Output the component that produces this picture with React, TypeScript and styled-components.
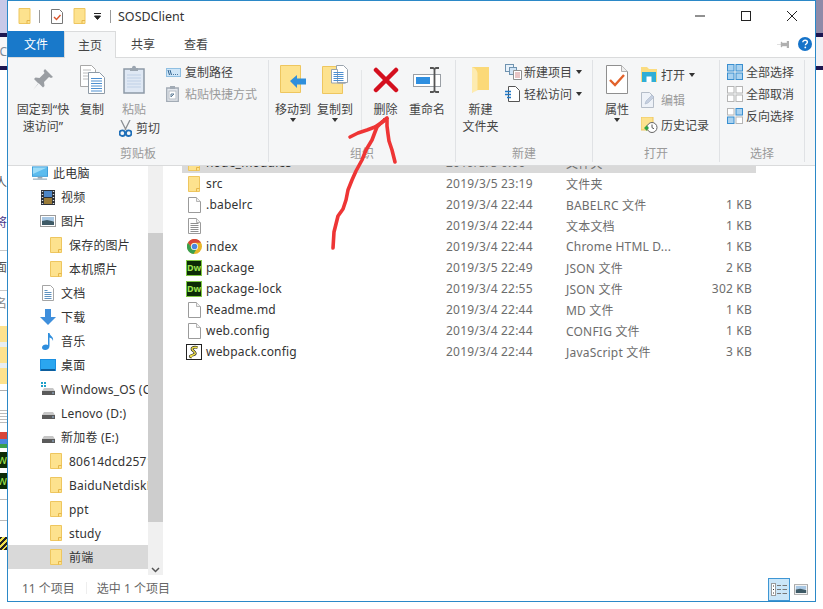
import React from "react";
import styled, { createGlobalStyle } from "styled-components";

const GlobalStyle = createGlobalStyle`
  html, body {
    margin: 0;
    padding: 0;
    background: #fff;
  }
  body {
    font-family: "Noto Sans", "Noto Sans CJK SC", sans-serif;
    font-size: 12px;
    color: #333;
  }
`;

const Page = styled.div`
  position: relative;
  width: 823px;
  height: 609px;
  display: flex;
  align-items: flex-start;
  overflow: hidden;
`;

const Strip = styled.div`
  width: 7px;
  flex: none;
  display: flex;
  flex-direction: column;
  overflow: hidden;
`;

const StripBlock = styled.div<{ $h: number; $bg?: string; $color?: string }>`
  height: ${(p) => p.$h}px;
  flex: none;
  background: ${(p) => p.$bg || "#fff"};
  color: ${(p) => p.$color || "#555"};
  display: flex;
  justify-content: flex-end;
  align-items: center;
  font-size: 12px;
  line-height: 1;
  white-space: nowrap;
`;

const Window = styled.div`
  width: 809px;
  height: 602px;
  flex: none;
  box-sizing: border-box;
  border: 1px solid #2b88c7;
  background: #fff;
  display: flex;
  flex-direction: column;
`;

const TitleBar = styled.div`
  height: 30px;
  flex: none;
  display: flex;
  align-items: center;
  padding-left: 10px;
`;

const QuickItem = styled.div<{ $ml?: number }>`
  margin-left: ${(p) => p.$ml || 0}px;
  display: flex;
  align-items: center;
`;

const TitleSep = styled.div<{ $ml: number }>`
  width: 1px;
  height: 13px;
  margin-left: ${(p) => p.$ml}px;
  background: #9a9a9a;
`;

const TitleText = styled.div`
  margin-left: 7px;
  font-size: 12.5px;
  color: #333;
`;

const WindowControls = styled.div`
  margin-left: auto;
  display: flex;
`;

const ControlButton = styled.div`
  width: 46px;
  height: 30px;
  display: flex;
  align-items: center;
  justify-content: center;
`;

const TabRow = styled.div`
  height: 27px;
  flex: none;
  box-sizing: border-box;
  display: flex;
  border-bottom: 1px solid #dadbdc;
`;

const Tab = styled.div<{ $w: number; $kind?: "file" | "active" }>`
  width: ${(p) => p.$w}px;
  height: ${(p) => (p.$kind === "active" ? 27 : 26)}px;
  box-sizing: border-box;
  display: flex;
  align-items: center;
  justify-content: center;
  color: ${(p) => (p.$kind === "file" ? "#fff" : "#444")};
  background: ${(p) =>
    p.$kind === "file" ? "#1979ca" : p.$kind === "active" ? "#f5f6f7" : "transparent"};
  border: ${(p) => (p.$kind === "active" ? "1px solid #dadbdc" : "none")};
  border-bottom: none;
`;

const TabExtras = styled.div`
  margin-left: auto;
  padding-right: 3px;
  display: flex;
  align-items: center;
  gap: 9px;
`;

const Ribbon = styled.div`
  height: 108px;
  flex: none;
  box-sizing: border-box;
  padding-top: 2px;
  display: flex;
  background: #f5f6f7;
  border-bottom: 1px solid #dadbdc;
`;

const Group = styled.div<{ $w: number }>`
  width: ${(p) => p.$w}px;
  height: 102px;
  flex: none;
  box-sizing: border-box;
  display: flex;
  flex-direction: column;
  border-right: 1px solid #e0e2e5;
`;

const GroupBody = styled.div<{ $pl?: number }>`
  height: 85px;
  flex: none;
  display: flex;
  padding-left: ${(p) => p.$pl || 0}px;
`;

const GroupLabel = styled.div`
  height: 17px;
  line-height: 17px;
  text-align: center;
  color: #9a9a9a;
`;

const LargeButton = styled.div<{ $w: number }>`
  width: ${(p) => p.$w}px;
  flex: none;
  display: flex;
  flex-direction: column;
  align-items: center;
`;

const LargeIcon = styled.div`
  height: 39px;
  margin-bottom: 2px;
  display: flex;
  align-items: center;
  justify-content: center;
`;

const LargeLabel = styled.div<{ $muted?: boolean }>`
  line-height: 17px;
  text-align: center;
  white-space: pre;
  color: ${(p) => (p.$muted ? "#9a9a9a" : "#444")};
`;

const Caret = styled.span`
  display: block;
  flex: none;
  width: 0;
  height: 0;
  border-left: 3.5px solid transparent;
  border-right: 3.5px solid transparent;
  border-top: 4px solid #333;
`;

const InnerDivider = styled.div`
  width: 1px;
  height: 60px;
  margin: 10px 0 0 5px;
  flex: none;
  background: #e4e6e8;
`;

const PasteColumn = styled.div`
  width: 52px;
  flex: none;
  display: flex;
  flex-direction: column;
`;

const SmallColumn = styled.div<{ $mt?: number }>`
  margin-top: ${(p) => p.$mt ?? 1}px;
  display: flex;
  flex-direction: column;
`;

const SmallRow = styled.div<{ $h?: number; $ml?: number }>`
  height: ${(p) => p.$h || 22}px;
  margin-left: ${(p) => p.$ml || 0}px;
  display: flex;
  align-items: center;
  white-space: nowrap;
`;

const SmallIcon = styled.div<{ $w?: number }>`
  width: ${(p) => p.$w || 19}px;
  flex: none;
  display: flex;
  align-items: center;
`;

const SmallLabel = styled.span<{ $muted?: boolean }>`
  color: ${(p) => (p.$muted ? "#9a9a9a" : "#444")};
`;

const SmallCaret = styled(Caret)`
  margin-left: 4px;
`;

const Content = styled.div`
  flex: 1;
  min-height: 0;
  display: flex;
`;

const Sidebar = styled.div`
  width: 155px;
  flex: none;
  display: flex;
  overflow: hidden;
`;

const NavList = styled.div`
  width: 140px;
  flex: none;
  margin-top: -5px;
  display: flex;
  flex-direction: column;
`;

const NavRow = styled.div<{ $level: number; $selected?: boolean }>`
  height: 24px;
  flex: none;
  box-sizing: border-box;
  padding-left: ${(p) => 24 + p.$level * 8}px;
  display: flex;
  align-items: center;
  overflow: hidden;
  white-space: nowrap;
  background: ${(p) => (p.$selected ? "#d9d9d9" : "transparent")};
`;

const NavIcon = styled.div`
  width: 16px;
  flex: none;
  margin-right: 5px;
  display: flex;
  justify-content: center;
`;

const NavText = styled.span`
  color: #333;
  letter-spacing: 0.2px;
`;

const ScrollTrack = styled.div`
  width: 15px;
  flex: none;
  display: flex;
  flex-direction: column;
  align-items: center;
  background: #f0f0f0;
`;

const ScrollThumb = styled.div`
  width: 15px;
  height: 289px;
  margin-top: 67px;
  background: #cdcdcd;
`;

const ScrollArrow = styled.div`
  margin-top: auto;
  margin-bottom: 2px;
  display: flex;
`;

const FilePane = styled.div`
  flex: 1;
  margin-left: 19px;
  overflow: hidden;
`;

const FileList = styled.div`
  width: 574px;
  margin-top: -14px;
`;

const FileRow = styled.div<{ $selected?: boolean }>`
  height: 21px;
  display: grid;
  grid-template-columns: 24px 240px 120px 120px 66px;
  align-items: center;
  white-space: nowrap;
  letter-spacing: 0.2px;
  background: ${(p) => (p.$selected ? "#d9d9d9" : "transparent")};
`;

const FileIconCell = styled.div`
  display: flex;
  justify-content: center;
`;

const FileName = styled.span`
  color: #333;
`;

const FileMeta = styled.span`
  color: #6d6d6d;
`;

const FileSize = styled(FileMeta)`
  text-align: right;
`;

const DwBadge = styled.div`
  width: 16px;
  height: 16px;
  box-sizing: border-box;
  border: 1px solid #7ec843;
  background: #0c2b06;
  color: #9be34e;
  font-size: 9px;
  font-weight: 700;
  line-height: 14px;
  letter-spacing: 0;
  text-align: center;
`;

const StatusBar = styled.div`
  height: 26px;
  flex: none;
  display: flex;
  align-items: center;
  padding-left: 14px;
  color: #666;
`;

const StatusDivider = styled.div`
  width: 1px;
  height: 12px;
  margin: 0 10px 0 11px;
  background: #eee;
`;

const ViewButtons = styled.div`
  margin-left: auto;
  margin-right: 7px;
  align-self: flex-end;
  display: flex;
  align-items: center;
  gap: 4px;
`;

const ViewButton = styled.div<{ $active?: boolean }>`
  width: 22px;
  height: 23px;
  box-sizing: border-box;
  display: flex;
  align-items: center;
  justify-content: center;
  background: ${(p) => (p.$active ? "#cbe6f8" : "transparent")};
  border: 1px solid ${(p) => (p.$active ? "#3e96d4" : "transparent")};
`;

const Annotation = styled.svg`
  position: absolute;
  left: 0;
  top: 0;
  pointer-events: none;
`;

/* ---------- icons ---------- */

function Folder({ w = 12, h = 16 }: { w?: number; h?: number }) {
  return (
    <svg width={w} height={h} viewBox="0 0 12 16">
      <path d="M.5.5h11v15H.5z" fill="#fde28e" stroke="#eec65f" />
      <path d="M8.5 15.5v-3h3" fill="none" stroke="#e6b64a" />
    </svg>
  );
}

function PageIcon({ lines }: { lines?: boolean }) {
  return (
    <svg width="13" height="16" viewBox="0 0 13 16">
      <path d="M.5.5h8l4 4v11H.5z" fill="#fff" stroke="#9b9b9b" />
      <path d="M8.5.5v4h4" fill="#f0f0f0" stroke="#b5b5b5" />
      {lines && (
        <path d="M2.5 5.5h8M2.5 7.5h8M2.5 9.5h8M2.5 11.5h8M2.5 13.5h8" stroke="#8f8f8f" />
      )}
    </svg>
  );
}

function ChromeIcon() {
  return (
    <svg width="15" height="15" viewBox="0 0 16 16">
      <circle cx="8" cy="8" r="8" fill="#e8b62a" />
      <path d="M1 4A8 8 0 0 1 15 4H8A4 4 0 0 0 4 8z" fill="#d8453a" />
      <path d="M1 4a8 8 0 0 0 6 12l3-5a4 4 0 0 1-6-3z" fill="#3a9f4e" />
      <circle cx="8" cy="8" r="3.8" fill="#fff" />
      <circle cx="8" cy="8" r="3" fill="#4a86e0" />
    </svg>
  );
}

function ScriptIcon() {
  return (
    <svg width="16" height="16" viewBox="0 0 16 16">
      <rect x=".5" y=".5" width="15" height="15" fill="#fff" stroke="#222" />
      <path d="M11.5 3.5C7 2.5 4.5 4.5 7 6.5s3.5 3.500 0 4.500-3.500 1.500-1 2" fill="none" stroke="#222" strokeWidth="2.8" />
      <path d="M11.5 3.5C7 2.5 4.500 4.500 7 6.500s3.500 3.500 0 4.500-3.500 1.500-1 2" fill="none" stroke="#f0e04a" strokeWidth="1.4" />
    </svg>
  );
}

function MonitorIcon() {
  return (
    <svg width="17" height="15" viewBox="0 0 17 15">
      <rect x=".5" y=".5" width="16" height="10" fill="#5cbcee" stroke="#3a9ad6" />
      <path d="M1 1h15L1 8z" fill="#9cdcf8" />
      <path d="M6 11h5v2H6z" fill="#9aa7b0" />
      <path d="M1 13.500h15" stroke="#9fb4c2" strokeWidth="1.4" />
    </svg>
  );
}

function VideoIcon() {
  return (
    <svg width="14" height="15" viewBox="0 0 14 15">
      <rect width="14" height="15" fill="#2d3138" />
      <rect x="3" y="1" width="8" height="6" fill="#4e86c6" />
      <rect x="3" y="8" width="8" height="6" fill="#9a7b38" />
      <path d="M.8 1.500h1.400M.8 4.500h1.400M.8 7.500h1.400M.8 10.500h1.400M.8 13.500h1.400M11.800 1.500h1.400M11.800 4.500h1.400M11.800 7.500h1.400M11.800 10.500h1.400M11.800 13.500h1.400" stroke="#dfe3e8" />
    </svg>
  );
}

function PictureIcon({ w = 16, h = 12 }: { w?: number; h?: number }) {
  return (
    <svg width={w} height={h} viewBox="0 0 16 12">
      <rect x=".5" y=".5" width="15" height="11" fill="#fff" stroke="#9b9b9b" />
      <rect x="2" y="2" width="12" height="4" fill="#a9c8e4" />
      <path d="M2 6l5-1 7 1.500V10H2z" fill="#3e5a66" />
    </svg>
  );
}

function DocIcon() {
  return (
    <svg width="12" height="16" viewBox="0 0 12 16">
      <path d="M.5.5h8l3 3v12H.5z" fill="#fff" stroke="#a5a5a5" />
      <path d="M2.500 5.500h3M2.500 7.500h7M2.500 9.500h7M2.500 11.500h7M2.500 13.500h7" stroke="#5f92bf" />
    </svg>
  );
}

function DownloadIcon() {
  return (
    <svg width="16" height="16" viewBox="0 0 16 16">
      <path d="M5 0h6v8h5l-8 8-8-8h5z" fill="#3f8fdc" />
    </svg>
  );
}

function MusicIcon() {
  return (
    <svg width="12" height="17" viewBox="0 0 12 17">
      <path d="M6 0h1.500c.4 3 4.500 3.500 3.500 8-.6-2.200-2-3-3.500-3.400V13c0 2.400-2 4-4.300 4C1 17 0 16 0 14.600 0 12.800 2 11.500 4 11.500c.8 0 1.500.2 2 .5z" fill="#2f8edd" />
    </svg>
  );
}

function DesktopIcon() {
  return (
    <svg width="16" height="12" viewBox="0 0 16 12">
      <rect width="16" height="12" fill="#1b8fe0" />
      <path d="M1 1h14v9H1z" fill="#2ba6ef" />
      <path d="M1 10h14v2H1z" fill="#0e5e9c" />
    </svg>
  );
}

function DriveIcon({ system }: { system?: boolean }) {
  return (
    <svg width="15" height="14" viewBox="0 0 15 14">
      {system && <path d="M0 0h2v2H0zM3 0h2v2H3zM0 3h2v2H0zM3 3h2v2H3z" fill="#1fa0c8" />}
      <path d="M3 6h9l2 3H1z" fill="#c6c6c6" />
      <rect x="1" y="9" width="13" height="4" fill="#5a5a5a" />
      <rect x="11" y="10.500" width="2" height="1" fill="#9bd" />
    </svg>
  );
}

function PinIcon() {
  return (
    <svg width="22" height="23" viewBox="0 0 22 23">
      <path d="M13 1l8 8-2 1-2-1-5 5 .5 4-1.500 1.500-4.500-4.500L1 22l5.500-6.500L2 11l1.500-1.500 4 .5 5-5-1-2z" fill="#9a9ea3" />
    </svg>
  );
}

function CopyIcon() {
  return (
    <svg width="25" height="29" viewBox="0 0 25 29">
      <path d="M.5.5h11l4 4v17H.5z" fill="#fff" stroke="#a8a8a8" />
      <path d="M3 5h8M3 8h8M3 11h8M3 14h5" stroke="#bcbcbc" />
      <path d="M8.500 7.500h11l5 5v16h-16z" fill="#fff" stroke="#8e9aa6" />
      <path d="M11 13.500h11M11 16h11M11 18.500h11M11 21h11M11 23.500h11M11 26h11" stroke="#4d8fd0" />
    </svg>
  );
}

function PasteIcon() {
  return (
    <svg width="22" height="29" viewBox="0 0 22 29">
      <path d="M1 4h20v24H1z" fill="#dfe8f4" stroke="#8d99a6" strokeWidth="1.500" />
      <path d="M7 3h2c0-3 4-3 4 0h2v3H7z" fill="#9ba5b0" />
      <path d="M4 10h14M4 13h14M4 16h14M4 19h14M4 22h14" stroke="#bfd0e6" />
    </svg>
  );
}

function ScissorsIcon() {
  return (
    <svg width="13" height="17" viewBox="0 0 13 17">
      <path d="M2 0l5 10M11 0L6 10" stroke="#8a8f94" strokeWidth="1.300" fill="none" />
      <circle cx="3.300" cy="13.200" r="2.800" fill="none" stroke="#1f6fb8" strokeWidth="1.900" />
      <circle cx="9.700" cy="13.200" r="2.800" fill="none" stroke="#1f6fb8" strokeWidth="1.900" />
    </svg>
  );
}

function CopyPathIcon() {
  return (
    <svg width="15" height="9" viewBox="0 0 15 9">
      <rect x=".5" y=".5" width="14" height="8" fill="#cfe6f8" stroke="#8fbfe2" />
      <path d="M2 2l1.500 5M4 2l1.500 5M7 6.500h.8M9 6.500h.8M11 6.500h.8" stroke="#2a5e8c" />
    </svg>
  );
}

function ShortcutIcon() {
  return (
    <svg width="13" height="16" viewBox="0 0 13 16">
      <path d="M.7 2h11.600v13.300H.7z" fill="#e4e8ee" stroke="#a2abb5" strokeWidth="1.300" />
      <path d="M4 0h5v3H4z" fill="#a2abb5" />
      <rect x="3" y="5" width="7" height="8" fill="#fff" stroke="#b5bcc4" />
      <path d="M5 11V8h3M8 8l-3 3" stroke="#5f7c96" fill="none" />
    </svg>
  );
}

function MoveToIcon() {
  return (
    <svg width="27" height="29" viewBox="0 0 27 29">
      <path d="M.5.500h20v27H.5z" fill="#fde28e" stroke="#eec65f" />
      <path d="M10 16l7-6v3.500h9v6h-9V23z" fill="#2f8fdc" />
    </svg>
  );
}

function CopyToIcon() {
  return (
    <svg width="26" height="30" viewBox="0 0 26 30">
      <path d="M.5 1.500h20v27H.5z" fill="#fde28e" stroke="#eec65f" />
      <path d="M14.500 7.500V.5h7l4 4v13h-11z" fill="#fff" stroke="#9aa4ae" />
      <path d="M9.500 4.500h6v13.500h8V18h-14z" fill="#fff" stroke="#9aa4ae" />
      <path d="M11.500 7.500h10M11.500 9.500h10M11.500 11.500h10M11.500 13.500h10M11.500 15.500h10" stroke="#4d8fd0" />
    </svg>
  );
}

function DeleteIcon() {
  return (
    <svg width="26" height="26" viewBox="0 0 26 26">
      <path d="M3 3l20 20M23 3L3 23" stroke="#d40f1e" strokeWidth="4.500" strokeLinecap="round" />
    </svg>
  );
}

function RenameIcon() {
  return (
    <svg width="28" height="26" viewBox="0 0 28 26">
      <rect x=".5" y="7.500" width="27" height="12" fill="#fff" stroke="#9a9fa5" />
      <rect x="3" y="10" width="14" height="7" fill="#2f8fe0" />
      <path d="M17 1h3l1.500 1L23 1h3M21.500 2v22M17 25h3l1.500-1 1.500 1h3" fill="none" stroke="#555" strokeWidth="1.800" />
    </svg>
  );
}

function NewFolderIcon() {
  return (
    <svg width="19" height="28" viewBox="0 0 19 28">
      <path d="M1 1h17v23H8c-4 0-6.500 1-7 3z" fill="#fbd978" />
      <path d="M1 1c3 1 5 3 5.500 6v16c0 2-3 2.500-5.500 4z" fill="#fdebb0" />
    </svg>
  );
}

function NewItemIcon() {
  return (
    <svg width="17" height="16" viewBox="0 0 17 16">
      <rect x=".5" y=".5" width="8" height="7" fill="#e8f2fb" stroke="#6f93b0" />
      <rect x="4.500" y="3.500" width="7" height="7" fill="#cfe3f5" stroke="#6f93b0" />
      <path d="M8.500 6.500h8v9h-8z" fill="#fff" stroke="#8f8f8f" />
      <path d="M10 9h5M10 11h5M10 13h5" stroke="#d28a8a" />
    </svg>
  );
}

function EasyAccessIcon() {
  return (
    <svg width="15" height="16" viewBox="0 0 15 16">
      <path d="M3.500.5h7l4 4v11h-11z" fill="#fff" stroke="#555" />
      <path d="M0 5.500h6M0 8.500h6M2 11.500h4" stroke="#1f78c8" strokeWidth="1.300" />
    </svg>
  );
}

function PropertiesIcon() {
  return (
    <svg width="22" height="29" viewBox="0 0 22 29">
      <path d="M.5.500h15l6 6v22H.5z" fill="#fff" stroke="#8f8f8f" />
      <path d="M15.500.5v6h6" fill="#eee" stroke="#b0b0b0" />
      <path d="M4 15l5 5 9-10" fill="none" stroke="#e2622b" strokeWidth="2.400" />
    </svg>
  );
}

function OpenIcon() {
  return (
    <svg width="16" height="15" viewBox="0 0 16 15">
      <path d="M0 0h6l2 2h8v13H0z" fill="#fbdc80" />
      <path d="M1 5h14v10H1z" fill="#2faed6" />
      <path d="M5.500 15V9.500h5V15z" fill="#fff" />
    </svg>
  );
}

function EditIcon() {
  return (
    <svg width="14" height="16" viewBox="0 0 14 16">
      <path d="M.5.500h8l4 4v11H.5z" fill="#eef2f8" stroke="#b5bdc8" />
      <path d="M4 12l1-3 6-6 2 2-6 6z" fill="#c5cfe0" stroke="#aab6c8" strokeWidth=".6" />
    </svg>
  );
}

function HistoryIcon() {
  return (
    <svg width="17" height="16" viewBox="0 0 17 16">
      <path d="M0 0h12v13H0z" fill="#fde28e" stroke="#eec65f" />
      <circle cx="11" cy="10.500" r="5" fill="#fff" stroke="#666" />
      <path d="M11 7.500v3.200l2 1" fill="none" stroke="#555" />
      <path d="M3 11l3-3v1.800h1.500v2.400H6V14z" fill="#2fa344" />
    </svg>
  );
}

function GridIcon({ filled, size = 16 }: { filled: boolean[]; size?: number }) {
  const half = (size - 1) / 2;
  const cells = [
    [0, 0],
    [half + 1, 0],
    [0, half + 1],
    [half + 1, half + 1],
  ];
  return (
    <svg width={size} height={size} viewBox={`0 0 ${size} ${size}`}>
      {cells.map(([x, y], i) => (
        <rect
          key={i}
          x={x + 0.5}
          y={y + 0.5}
          width={half - 1}
          height={half - 1}
          fill={filled[i] ? "#a9d2f0" : "#fff"}
          stroke={filled[i] ? "#3a8fd0" : "#b5b5b5"}
        />
      ))}
    </svg>
  );
}

function HelpIcon() {
  return (
    <svg width="14" height="14" viewBox="0 0 14 14">
      <circle cx="7" cy="7" r="7" fill="#1573c9" />
      <path d="M4.800 5.300C4.800 3.800 6 3.200 7.100 3.200c1.300 0 2.300.8 2.300 1.900 0 1.700-2 1.700-2 3.200" fill="none" stroke="#fff" strokeWidth="1.400" />
      <circle cx="7.300" cy="10.400" r=".9" fill="#fff" />
    </svg>
  );
}

function RibbonPinIcon() {
  return (
    <svg width="12" height="7" viewBox="0 0 12 7">
      <path d="M0 3.500h4M4 1h1v5H4zM5 2h5v3H5zM10 0h2v7h-2z" fill="#b0b0b0" stroke="#b0b0b0" strokeWidth=".4" />
    </svg>
  );
}

function DetailViewIcon() {
  return (
    <svg width="16" height="13" viewBox="0 0 16 13">
      <rect x=".5" y=".5" width="4" height="12" fill="#fff" stroke="#9a9a9a" />
      <path d="M2 3h1M2 6.500h1M2 10h1" stroke="#333" />
      <path d="M6 2.500h4M11.500 2.500H16M6 6.500h4M11.500 6.500H16M6 10.500h4M11.500 10.500H16" stroke="#777" />
    </svg>
  );
}

/* ---------- data ---------- */

const leftStrip: { h: number; bg?: string; color?: string; text?: string }[] = [
  { h: 33, bg: "#c8c9e8" },
  { h: 4, bg: "#1c1650" },
  { h: 29, bg: "#f6f6f8", text: "eC", color: "#7a8a99" },
  { h: 4, bg: "#1c1650" },
  { h: 105 },
  { h: 15, text: "人" },
  { h: 25 },
  { h: 15, text: "将", color: "#4a3a8a" },
  { h: 20 },
  { h: 1, bg: "#c8c8c8" },
  { h: 9 },
  { h: 15, text: "面" },
  { h: 15 },
  { h: 1, bg: "#c8c8c8" },
  { h: 7 },
  { h: 12, text: "名", color: "#888" },
  { h: 16 },
  { h: 16, bg: "#fde28e" },
  { h: 5, bg: "#e8eef2" },
  { h: 16, bg: "#fde28e" },
  { h: 5, bg: "#e8eef2" },
  { h: 16, bg: "#fde28e" },
  { h: 6 },
  { h: 1, bg: "#b0b0b0" },
  { h: 19 },
  { h: 15, bg: "repeating-linear-gradient(#bbb 0 1px, #fff 1px 3px)" },
  { h: 7 },
  { h: 16, bg: "linear-gradient(#d8453a 0 45%, #4a86e0 45% 75%, #3a9f4e 75%)" },
  { h: 4 },
  { h: 16, bg: "#0c2b06", color: "#9be34e", text: "Dw" },
  { h: 5 },
  { h: 16, bg: "#0c2b06", color: "#9be34e", text: "Dw" },
  { h: 10 },
  { h: 1, bg: "#bbb" },
  { h: 20 },
  { h: 1, bg: "#bbb" },
  { h: 16 },
  { h: 13, bg: "repeating-linear-gradient(135deg, #222 0 2px, #f0e04a 2px 4px)" },
];

const rightStrip: { h: number; bg?: string }[] = [
  { h: 33, bg: "#8e8aa8" },
  { h: 4, bg: "#1c1650" },
  { h: 29, bg: "#f2f2f6" },
  { h: 4, bg: "#1c1650" },
];

const navItems: { label: string; level: number; icon: React.ReactNode; selected?: boolean }[] = [
  { label: "此电脑", level: 0, icon: <MonitorIcon /> },
  { label: "视频", level: 1, icon: <VideoIcon /> },
  { label: "图片", level: 1, icon: <PictureIcon /> },
  { label: "保存的图片", level: 2, icon: <Folder /> },
  { label: "本机照片", level: 2, icon: <Folder /> },
  { label: "文档", level: 1, icon: <DocIcon /> },
  { label: "下载", level: 1, icon: <DownloadIcon /> },
  { label: "音乐", level: 1, icon: <MusicIcon /> },
  { label: "桌面", level: 1, icon: <DesktopIcon /> },
  { label: "Windows_OS (C:)", level: 1, icon: <DriveIcon system /> },
  { label: "Lenovo (D:)", level: 1, icon: <DriveIcon /> },
  { label: "新加卷 (E:)", level: 1, icon: <DriveIcon /> },
  { label: "80614dcd2571", level: 2, icon: <Folder /> },
  { label: "BaiduNetdiskDownload", level: 2, icon: <Folder /> },
  { label: "ppt", level: 2, icon: <Folder /> },
  { label: "study", level: 2, icon: <Folder /> },
  { label: "前端", level: 2, icon: <Folder />, selected: true },
];

const files: {
  name: string;
  date: string;
  type: string;
  size: string;
  icon: React.ReactNode;
  selected?: boolean;
}[] = [
  { name: "node_modules", date: "2019/3/5 0:00", type: "文件夹", size: "", icon: <Folder />, selected: true },
  { name: "src", date: "2019/3/5 23:19", type: "文件夹", size: "", icon: <Folder /> },
  { name: ".babelrc", date: "2019/3/4 22:44", type: "BABELRC 文件", size: "1 KB", icon: <PageIcon /> },
  { name: "", date: "2019/3/4 22:44", type: "文本文档", size: "1 KB", icon: <PageIcon lines /> },
  { name: "index", date: "2019/3/4 22:44", type: "Chrome HTML D...", size: "1 KB", icon: <ChromeIcon /> },
  { name: "package", date: "2019/3/5 22:49", type: "JSON 文件", size: "2 KB", icon: <DwBadge>Dw</DwBadge> },
  { name: "package-lock", date: "2019/3/4 22:55", type: "JSON 文件", size: "302 KB", icon: <DwBadge>Dw</DwBadge> },
  { name: "Readme.md", date: "2019/3/4 22:44", type: "MD 文件", size: "1 KB", icon: <PageIcon /> },
  { name: "web.config", date: "2019/3/4 22:44", type: "CONFIG 文件", size: "1 KB", icon: <PageIcon /> },
  { name: "webpack.config", date: "2019/3/4 22:44", type: "JavaScript 文件", size: "3 KB", icon: <ScriptIcon /> },
];

export default function App() {
  return (
    <Page>
      <GlobalStyle />
      <Strip>
        {leftStrip.map((b, i) => (
          <StripBlock key={i} $h={b.h} $bg={b.bg} $color={b.color}>
            {b.text}
          </StripBlock>
        ))}
      </Strip>

      <Window>
        <TitleBar>
          <QuickItem>
            <Folder w={13} h={16} />
          </QuickItem>
          <TitleSep $ml={8} />
          <QuickItem $ml={11}>
            <svg width="12" height="15" viewBox="0 0 12 15">
              <path d="M.5.500h8l3 3v11H.5z" fill="#fff" stroke="#777" />
              <path d="M3 8l2.500 2.500L9.500 6" fill="none" stroke="#d9542b" strokeWidth="1.400" />
            </svg>
          </QuickItem>
          <QuickItem $ml={10}>
            <Folder w={13} h={16} />
          </QuickItem>
          <QuickItem $ml={8}>
            <svg width="8" height="7" viewBox="0 0 8 7">
              <path d="M0 .5h7M.5 3h6L3.500 6.500z" stroke="#222" fill="#222" />
            </svg>
          </QuickItem>
          <TitleSep $ml={8} />
          <TitleText>SOSDClient</TitleText>
          <WindowControls>
            <ControlButton>
              <svg width="10" height="2" viewBox="0 0 10 2">
                <path d="M0 1h10" stroke="#222" />
              </svg>
            </ControlButton>
            <ControlButton>
              <svg width="10" height="10" viewBox="0 0 10 10">
                <rect x=".5" y=".5" width="9" height="9" fill="none" stroke="#222" />
              </svg>
            </ControlButton>
            <ControlButton>
              <svg width="10" height="10" viewBox="0 0 10 10">
                <path d="M0 0l10 10M10 0L0 10" stroke="#222" />
              </svg>
            </ControlButton>
          </WindowControls>
        </TitleBar>

        <TabRow>
          <Tab $w={56} $kind="file">文件</Tab>
          <Tab $w={52} $kind="active">主页</Tab>
          <Tab $w={54}>共享</Tab>
          <Tab $w={52}>查看</Tab>
          <TabExtras>
            <RibbonPinIcon />
            <HelpIcon />
          </TabExtras>
        </TabRow>

        <Ribbon>
          <Group $w={261}>
            <GroupBody $pl={8}>
              <LargeButton $w={54}>
                <LargeIcon><PinIcon /></LargeIcon>
                <LargeLabel>{"固定到“快\n速访问”"}</LargeLabel>
              </LargeButton>
              <LargeButton $w={44}>
                <LargeIcon><CopyIcon /></LargeIcon>
                <LargeLabel>复制</LargeLabel>
              </LargeButton>
              <PasteColumn>
                <LargeButton $w={40}>
                  <LargeIcon><PasteIcon /></LargeIcon>
                  <LargeLabel $muted>粘贴</LargeLabel>
                </LargeButton>
                <SmallRow $h={20} $ml={5}>
                  <SmallIcon $w={17}><ScissorsIcon /></SmallIcon>
                  <SmallLabel>剪切</SmallLabel>
                </SmallRow>
              </PasteColumn>
              <SmallColumn>
                <SmallRow>
                  <SmallIcon><CopyPathIcon /></SmallIcon>
                  <SmallLabel>复制路径</SmallLabel>
                </SmallRow>
                <SmallRow>
                  <SmallIcon><ShortcutIcon /></SmallIcon>
                  <SmallLabel $muted>粘贴快捷方式</SmallLabel>
                </SmallRow>
              </SmallColumn>
            </GroupBody>
            <GroupLabel>剪贴板</GroupLabel>
          </Group>

          <Group $w={187}>
            <GroupBody $pl={3}>
              <LargeButton $w={42}>
                <LargeIcon><MoveToIcon /></LargeIcon>
                <LargeLabel>移动到</LargeLabel>
                <Caret />
              </LargeButton>
              <LargeButton $w={42}>
                <LargeIcon><CopyToIcon /></LargeIcon>
                <LargeLabel>复制到</LargeLabel>
                <Caret />
              </LargeButton>
              <InnerDivider />
              <LargeButton $w={47}>
                <LargeIcon><DeleteIcon /></LargeIcon>
                <LargeLabel>删除</LargeLabel>
                <Caret />
              </LargeButton>
              <LargeButton $w={36}>
                <LargeIcon><RenameIcon /></LargeIcon>
                <LargeLabel>重命名</LargeLabel>
              </LargeButton>
            </GroupBody>
            <GroupLabel>组织</GroupLabel>
          </Group>

          <Group $w={137}>
            <GroupBody>
              <LargeButton $w={49}>
                <LargeIcon><NewFolderIcon /></LargeIcon>
                <LargeLabel>{"新建\n文件夹"}</LargeLabel>
              </LargeButton>
              <SmallColumn>
                <SmallRow>
                  <SmallIcon><NewItemIcon /></SmallIcon>
                  <SmallLabel>新建项目</SmallLabel>
                  <SmallCaret />
                </SmallRow>
                <SmallRow>
                  <SmallIcon><EasyAccessIcon /></SmallIcon>
                  <SmallLabel>轻松访问</SmallLabel>
                  <SmallCaret />
                </SmallRow>
              </SmallColumn>
            </GroupBody>
            <GroupLabel>新建</GroupLabel>
          </Group>

          <Group $w={127}>
            <GroupBody>
              <LargeButton $w={48}>
                <LargeIcon><PropertiesIcon /></LargeIcon>
                <LargeLabel>属性</LargeLabel>
                <Caret />
              </LargeButton>
              <SmallColumn $mt={2}>
                <SmallRow $h={25}>
                  <SmallIcon $w={20}><OpenIcon /></SmallIcon>
                  <SmallLabel>打开</SmallLabel>
                  <SmallCaret />
                </SmallRow>
                <SmallRow $h={25}>
                  <SmallIcon $w={20}><EditIcon /></SmallIcon>
                  <SmallLabel $muted>编辑</SmallLabel>
                </SmallRow>
                <SmallRow $h={25}>
                  <SmallIcon $w={20}><HistoryIcon /></SmallIcon>
                  <SmallLabel>历史记录</SmallLabel>
                </SmallRow>
              </SmallColumn>
            </GroupBody>
            <GroupLabel>打开</GroupLabel>
          </Group>

          <Group $w={85}>
            <GroupBody $pl={7}>
              <SmallColumn>
                <SmallRow>
                  <SmallIcon><GridIcon filled={[true, true, true, true]} /></SmallIcon>
                  <SmallLabel>全部选择</SmallLabel>
                </SmallRow>
                <SmallRow>
                  <SmallIcon><GridIcon filled={[false, false, false, false]} /></SmallIcon>
                  <SmallLabel>全部取消</SmallLabel>
                </SmallRow>
                <SmallRow>
                  <SmallIcon><GridIcon filled={[false, true, true, false]} /></SmallIcon>
                  <SmallLabel>反向选择</SmallLabel>
                </SmallRow>
              </SmallColumn>
            </GroupBody>
            <GroupLabel>选择</GroupLabel>
          </Group>
        </Ribbon>

        <Content>
          <Sidebar>
            <NavList>
              {navItems.map((item) => (
                <NavRow key={item.label} $level={item.level} $selected={item.selected}>
                  <NavIcon>{item.icon}</NavIcon>
                  <NavText>{item.label}</NavText>
                </NavRow>
              ))}
            </NavList>
            <ScrollTrack>
              <ScrollThumb />
              <ScrollArrow>
                <svg width="9" height="6" viewBox="0 0 9 6">
                  <path d="M1 1l3.500 3.500L8 1" fill="none" stroke="#555" strokeWidth="1.500" />
                </svg>
              </ScrollArrow>
            </ScrollTrack>
          </Sidebar>

          <FilePane>
            <FileList>
              {files.map((f, i) => (
                <FileRow key={i} $selected={f.selected}>
                  <FileIconCell>{f.icon}</FileIconCell>
                  <FileName>{f.name}</FileName>
                  <FileMeta>{f.date}</FileMeta>
                  <FileMeta>{f.type}</FileMeta>
                  <FileSize>{f.size}</FileSize>
                </FileRow>
              ))}
            </FileList>
          </FilePane>
        </Content>

        <StatusBar>
          <span>11 个项目</span>
          <StatusDivider />
          <span>选中 1 个项目</span>
          <ViewButtons>
            <ViewButton $active><DetailViewIcon /></ViewButton>
            <PictureIcon w={14} h={11} />
          </ViewButtons>
        </StatusBar>
      </Window>

      <Strip>
        {rightStrip.map((b, i) => (
          <StripBlock key={i} $h={b.h} $bg={b.bg} />
        ))}
      </Strip>

      <Annotation width="823" height="609" viewBox="0 0 823 609">
        <path
          d="M333 248L334 232L336 224L338 216L343 209L346 200L348 190L352 180L356 171L362 160L366 150L372 140L375 132L377 127L381 123L385 120"
          fill="none"
          stroke="#ee3535"
          strokeWidth="3.600"
          strokeLinecap="round"
          strokeLinejoin="round"
        />
        <path
          d="M350 137L358 133L367 130L375 127L381 123L387 118L387 126L388 134L389 141L392 150L395 162"
          fill="none"
          stroke="#ee3535"
          strokeWidth="3.600"
          strokeLinecap="round"
          strokeLinejoin="round"
        />
      </Annotation>
    </Page>
  );
}
